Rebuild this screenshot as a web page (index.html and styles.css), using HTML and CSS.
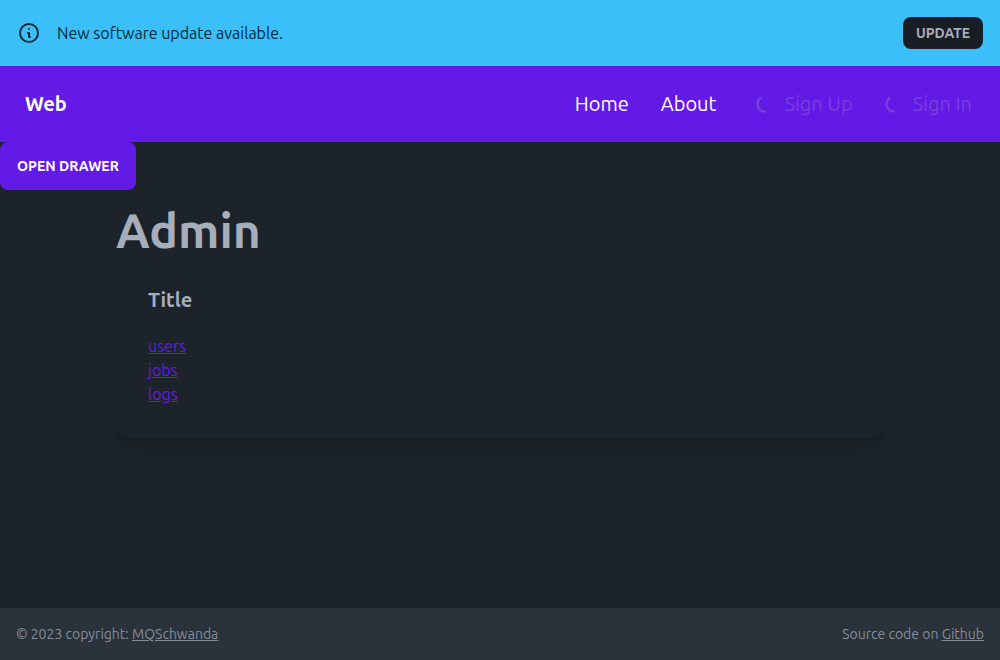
FILE: index.html
```html
<!DOCTYPE html>
<html lang="en">
<head>
<meta charset="utf-8">
<meta name="viewport" content="width=device-width, initial-scale=1">
<title>Web</title>
<link rel="stylesheet" href="styles.css">
</head>
<body class="page">
<div class="alert" role="status">
  <svg class="alert-icon" viewBox="0 0 24 24" fill="none" stroke="currentColor" stroke-width="2" stroke-linecap="round" stroke-linejoin="round" aria-hidden="true"><path d="M13 16h-1v-4h-1m1-4h.01M21 12a9 9 0 11-18 0 9 9 0 0118 0z"/></svg>
  <span class="alert-text">New software update available.</span>
  <button class="btn btn-small" type="button">Update</button>
</div>
<nav class="navbar">
  <a class="brand" href="#">Web</a>
  <div class="menus">
    <ul class="menu">
      <li><a class="menu-item" href="#">Home</a></li>
      <li><a class="menu-item" href="#">About</a></li>
    </ul>
    <ul class="menu">
      <li><button class="menu-item" type="button" disabled><svg class="spinner" viewBox="0 0 20 20" fill="none" stroke="currentColor" stroke-width="2.5" stroke-linecap="round" aria-hidden="true"><path d="M4.500 4C-.5 8 .5 17 8.700 17.500"/></svg>Sign Up</button></li>
      <li><button class="menu-item" type="button" disabled><svg class="spinner" viewBox="0 0 20 20" fill="none" stroke="currentColor" stroke-width="2.5" stroke-linecap="round" aria-hidden="true"><path d="M4.500 4C-.5 8 .5 17 8.700 17.500"/></svg>Sign In</button></li>
    </ul>
  </div>
</nav>
<main class="content">
  <button class="btn btn-primary" type="button">Open drawer</button>
  <div class="container">
    <h1 class="heading">Admin</h1>
    <section class="card">
      <h2 class="card-title">Title</h2>
      <ul class="links">
        <li><a class="link" href="#">users</a></li>
        <li><a class="link" href="#">jobs</a></li>
        <li><a class="link" href="#">logs</a></li>
      </ul>
    </section>
  </div>
</main>
<footer class="footer">
  <p class="footer-text">© 2023 copyright: <a class="footer-link" href="#">MQSchwanda</a></p>
  <p class="footer-text">Source code on <a class="footer-link" href="#">Github</a></p>
</footer>
</body>
</html>
```
FILE: styles.css
```css
*, *::before, *::after { box-sizing: border-box; }

.page {
  margin: 0;
  min-height: 100vh;
  display: flex;
  flex-direction: column;
  background: #1d232a;
  color: #a6adbb;
  font-family: Ubuntu, "Open Sans", "Noto Sans", sans-serif;
  font-size: 16px;
  font-weight: 400;
  line-height: 24px;
}

.alert {
  display: flex;
  align-items: center;
  gap: 16px;
  padding: 17px;
  background: #3abff8;
  color: #002b3d;
}
.alert-icon { width: 24px; height: 24px; flex: none; }
.alert-text { flex: 1; }

.btn {
  border: 0;
  border-radius: 8px;
  font-family: inherit;
  font-size: 14px;
  font-weight: 600;
  text-transform: uppercase;
  cursor: pointer;
}
.btn-small {
  height: 32px;
  padding: 0 13px;
  background: #191d24;
  color: #a6adbb;
}
.btn-primary {
  display: block;
  height: 48px;
  padding: 0 17px;
  background: #641ae6;
  color: #fff;
}

.navbar {
  display: flex;
  align-items: center;
  justify-content: space-between;
  padding: 12px;
  background: #641ae6;
  color: #fff;
  font-size: 20px;
  line-height: 28px;
}
.brand {
  padding: 12px 13px;
  color: inherit;
  font-weight: 600;
  text-decoration: none;
}
.menus { display: flex; gap: 8px; }
.menu {
  display: flex;
  margin: 0;
  padding: 0;
  list-style: none;
}
.menu-item {
  display: flex;
  align-items: center;
  gap: 8px;
  padding: 12px 16px;
  border: 0;
  background: none;
  color: #fff;
  font: inherit;
  text-decoration: none;
}
.menu-item:disabled { color: #7a3eda; }
.spinner { width: 20px; height: 20px; }

.content { flex: 1; }
.container {
  width: 100%;
  max-width: 800px;
  margin: 0 auto;
  padding: 16px;
}
.heading {
  margin: 0;
  font-size: 48px;
  font-weight: 600;
  line-height: 48px;
}
.card {
  display: flex;
  flex-direction: column;
  gap: 20px;
  padding: 32px;
  border-radius: 16px;
  box-shadow: 0 20px 25px -5px rgba(0, 0, 0, 0.1), 0 8px 10px -6px rgba(0, 0, 0, 0.1);
}
.card-title {
  margin: 0;
  font-size: 20px;
  font-weight: 600;
  line-height: 28px;
}
.links { margin: 0; padding: 0; list-style: none; }
.link { color: #641ae6; }

.footer {
  display: flex;
  justify-content: space-between;
  padding: 16px;
  background: #2a323c;
  color: #868d99;
  font-size: 14px;
  line-height: 20px;
}
.footer-text { margin: 0; }
.footer-link { color: inherit; }
```
